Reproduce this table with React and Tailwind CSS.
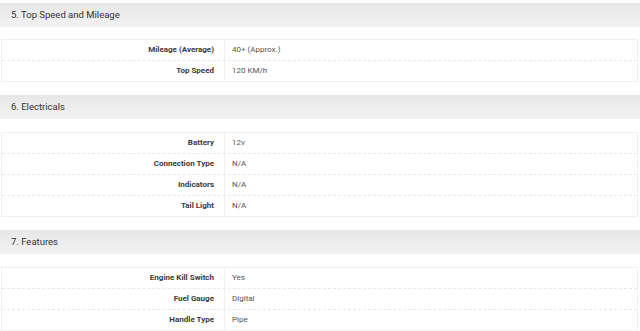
import React from "react";

const sections = [
  {
    title: "5. Top Speed and Mileage",
    rows: [
      ["Mileage (Average)", "40+ (Approx.)"],
      ["Top Speed", "120 KM/h"],
    ],
  },
  {
    title: "6. Electricals",
    rows: [
      ["Battery", "12v"],
      ["Connection Type", "N/A"],
      ["Indicators", "N/A"],
      ["Tail Light", "N/A"],
    ],
  },
  {
    title: "7. Features",
    rows: [
      ["Engine Kill Switch", "Yes"],
      ["Fuel Gauge", "Digital"],
      ["Handle Type", "Pipe"],
    ],
  },
];

export default function App() {
  return (
    <div className="w-[640px] h-[331px] overflow-hidden bg-white pt-[3px] font-['Roboto',sans-serif]">
      {sections.map((s, idx) => (
        <div key={s.title} className="mb-[13px]">
          <div className="h-[24px] flex items-center pl-[11px] bg-gradient-to-b from-[#e7e7e7] to-[#f2f2f2] text-[9.5px] text-[#333]">
            {s.title}
          </div>
          <div
            className={
              (idx === 0 ? "mt-[12px]" : "mt-[13px]") +
              " ml-[1px] mr-[2px] border border-[#f0f0f0]"
            }
          >
            {s.rows.map(([k, v], i) => (
              <div
                key={k}
                className={
                  "flex h-[20px] items-center text-[8px] box-content " +
                  (i > 0 ? "border-t border-dashed border-[#e9e9e9]" : "")
                }
              >
                <div className="w-[223px] h-full flex items-center justify-end pr-[10px] font-bold text-[#3a3a3a] border-r border-[#f0f0f0]">
                  {k}
                </div>
                <div className="pl-[7px] text-[#555]">{v}</div>
              </div>
            ))}
          </div>
        </div>
      ))}
    </div>
  );
}
